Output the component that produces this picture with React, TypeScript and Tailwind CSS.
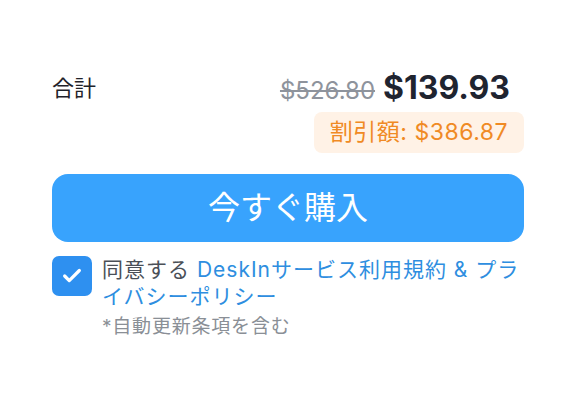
import { Check } from "lucide-react";

export default function App() {
  return (
    <div className="w-[576px] h-[400px] bg-white px-[52px] pt-[68px] font-['Inter','Noto_Sans_CJK_JP',sans-serif]">
      {/* Total row */}
      <div className="flex items-center justify-between h-[40px]">
        <span className="text-[22px] text-[#1f2229]">合計</span>
        <div className="flex items-baseline gap-[8px] mr-[14px]">
          <span className="text-[24px] text-[#8e939c] line-through">$526.80</span>
          <span className="text-[32px] font-bold text-[#1f2430]">$139.93</span>
        </div>
      </div>

      <div className="flex justify-end mt-[4px]">
        <div className="h-[41px] px-[16px] rounded-[8px] bg-[#fff2e6] flex items-center text-[23px] tracking-[0.5px] text-[#f08a24]">
          割引額: $386.87
        </div>
      </div>

      <button className="mt-[21px] w-full h-[68px] rounded-[16px] bg-[#38a3fd] text-white text-[32px] flex items-center justify-center">
        今すぐ購入
      </button>

      <div className="mt-[14px] flex gap-[10px]">
        <div className="w-[40px] h-[40px] shrink-0 rounded-[7px] bg-[#2e90f0] flex items-center justify-center">
          <Check className="w-[22px] h-[22px] text-white" strokeWidth={3.5} />
        </div>
        <div>
          <p className="text-[21px] leading-[27px] tracking-[1px] text-[#4a4f57]">
            同意する <span className="text-[#2e8ee0]">DeskInサービス利用規約 & プライバシーポリシー</span>
          </p>
          <p className="mt-[4px] text-[19px] leading-[26px] tracking-[0.8px] text-[#8a8f96]">*自動更新条項を含む</p>
        </div>
      </div>
    </div>
  );
}
